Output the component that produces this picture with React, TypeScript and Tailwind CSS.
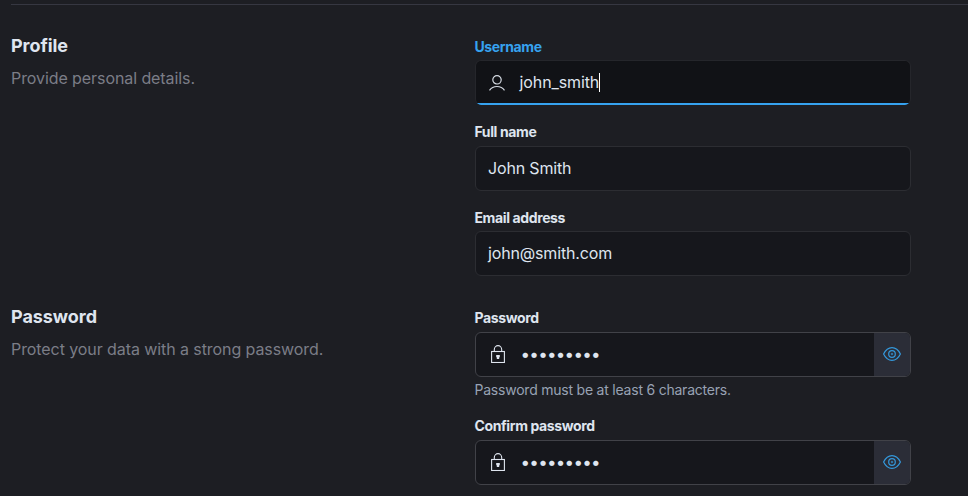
import type { ReactNode } from "react";

function UserIcon() {
  return (
    <svg className="mt-0.5 h-4 w-4 shrink-0" viewBox="0 0 16 16" fill="none" stroke="#d5dae2" strokeWidth="1.2">
      <circle cx="8" cy="4.8" r="4.200" />
      <path d="M0.5 15.4C2.4 12.6 5 11.5 8 11.5s5.600 1.100 7.500 3.900" />
    </svg>
  );
}

function LockIcon() {
  return (
    <svg className="h-[18px] w-[14px] shrink-0" viewBox="0 0 14 18" fill="none" stroke="#dfe5ef" strokeWidth="1.1">
      <rect x="0.6" y="6.5" width="12.8" height="11" />
      <path d="M3.300 6.500V4.600a3.700 4 0 0 1 7.400 0v1.900" />
      <path d="M5.200 10h3.600v2.200h-0.600v1.800h-2.400v-1.800h-0.600z" fill="#dfe5ef" stroke="none" />
    </svg>
  );
}

function EyeIcon() {
  return (
    <svg className="h-[14px] w-[18px]" viewBox="0 0 18 14" fill="none" stroke="#3498db" strokeWidth="1.2">
      <path d="M0.600 7C2.600 2.800 5.700 0.600 9 0.600S15.400 2.800 17.400 7C15.400 11.200 12.300 13.400 9 13.400S2.600 11.200 0.600 7z" />
      <circle cx="9" cy="7" r="3.300" />
      <circle cx="9" cy="7" r="0.800" strokeWidth="0.8" />
    </svg>
  );
}

function Label({ children, active = false }: { children: ReactNode; active?: boolean }) {
  return (
    <div
      className={`-ml-[0.5px] text-sm leading-5 font-[650] tracking-[-0.38px] ${active ? "text-[#36a2ef]" : "text-[#dfe5ef]"}`}
    >
      {children}
    </div>
  );
}

function TextField({ label, value, gap }: { label: string; value: string; gap: string }) {
  return (
    <div className={`flex flex-col ${gap}`}>
      <Label>{label}</Label>
      <div className="flex h-[45px] items-center rounded-md border border-[#2c2d32] bg-[#16171c] px-3 pb-0.5 text-base tracking-[-0.16px] text-[#dfe5ef]">
        {value}
      </div>
    </div>
  );
}

function PasswordField({ label }: { label: string }) {
  return (
    <div className="flex flex-col gap-1">
      <Label>{label}</Label>
      <div className="flex h-[45px] overflow-hidden rounded-md border border-[#414248] bg-[#16171c]">
        <div className="flex flex-1 items-center pb-px pl-[15px]">
          <LockIcon />
          <span className="ml-[15.5px] text-[17px] leading-6 tracking-[-0.75px] text-[#dfe5ef]">•••••••••</span>
        </div>
        <div className="flex w-9 items-center justify-center bg-[#2b2d37] pb-px">
          <EyeIcon />
        </div>
      </div>
    </div>
  );
}

function Intro({ title, text }: { title: string; text: string }) {
  return (
    <div className="w-[464px] shrink-0 pt-px">
      <h2 className="text-lg leading-6 font-bold tracking-[-0.05px] text-[#dfe5ef]">{title}</h2>
      <p className="mt-2 text-base leading-6 tracking-[-0.08px] text-[#7b7d87]">{text}</p>
    </div>
  );
}

export default function App() {
  return (
    <main className="h-[496px] overflow-hidden bg-[#1d1e23] pt-1 pl-[11px] font-['Inter','Liberation_Sans',sans-serif]">
      <div className="h-px bg-[#363741]" />
      <section className="flex pt-7">
        <Intro title="Profile" text="Provide personal details." />
        <div className="w-[436px] pt-1">
          <div className="flex flex-col gap-[3px]">
            <Label active>Username</Label>
            <div className="flex h-[45px] flex-col overflow-hidden rounded-md border border-b-0 border-[#25262b] bg-[#111216]">
              <div className="flex flex-1 items-center pl-[13px]">
                <UserIcon />
                <span className="ml-[14.5px] text-base tracking-[-0.1px] text-[#dfe5ef]">john_smith</span>
                <span className="h-[19px] w-px bg-white" />
              </div>
              <div className="h-0.5 shrink-0 bg-[#36a2ef]" />
            </div>
          </div>
          <div className="mt-[17px] flex flex-col gap-[17px]">
            <TextField label="Full name" value="John Smith" gap="gap-1" />
            <TextField label="Email address" value="john@smith.com" gap="gap-[3px]" />
          </div>
        </div>
      </section>
      <section className="flex pt-7">
        <Intro title="Password" text="Protect your data with a strong password." />
        <div className="w-[436px] pt-1">
          <PasswordField label="Password" />
          <p className="mt-[3px] -ml-[0.5px] text-sm leading-5 tracking-[-0.22px] text-[#98a2b3]">
            Password must be at least 6 characters.
          </p>
          <div className="mt-4">
            <PasswordField label="Confirm password" />
          </div>
        </div>
      </section>
    </main>
  );
}
